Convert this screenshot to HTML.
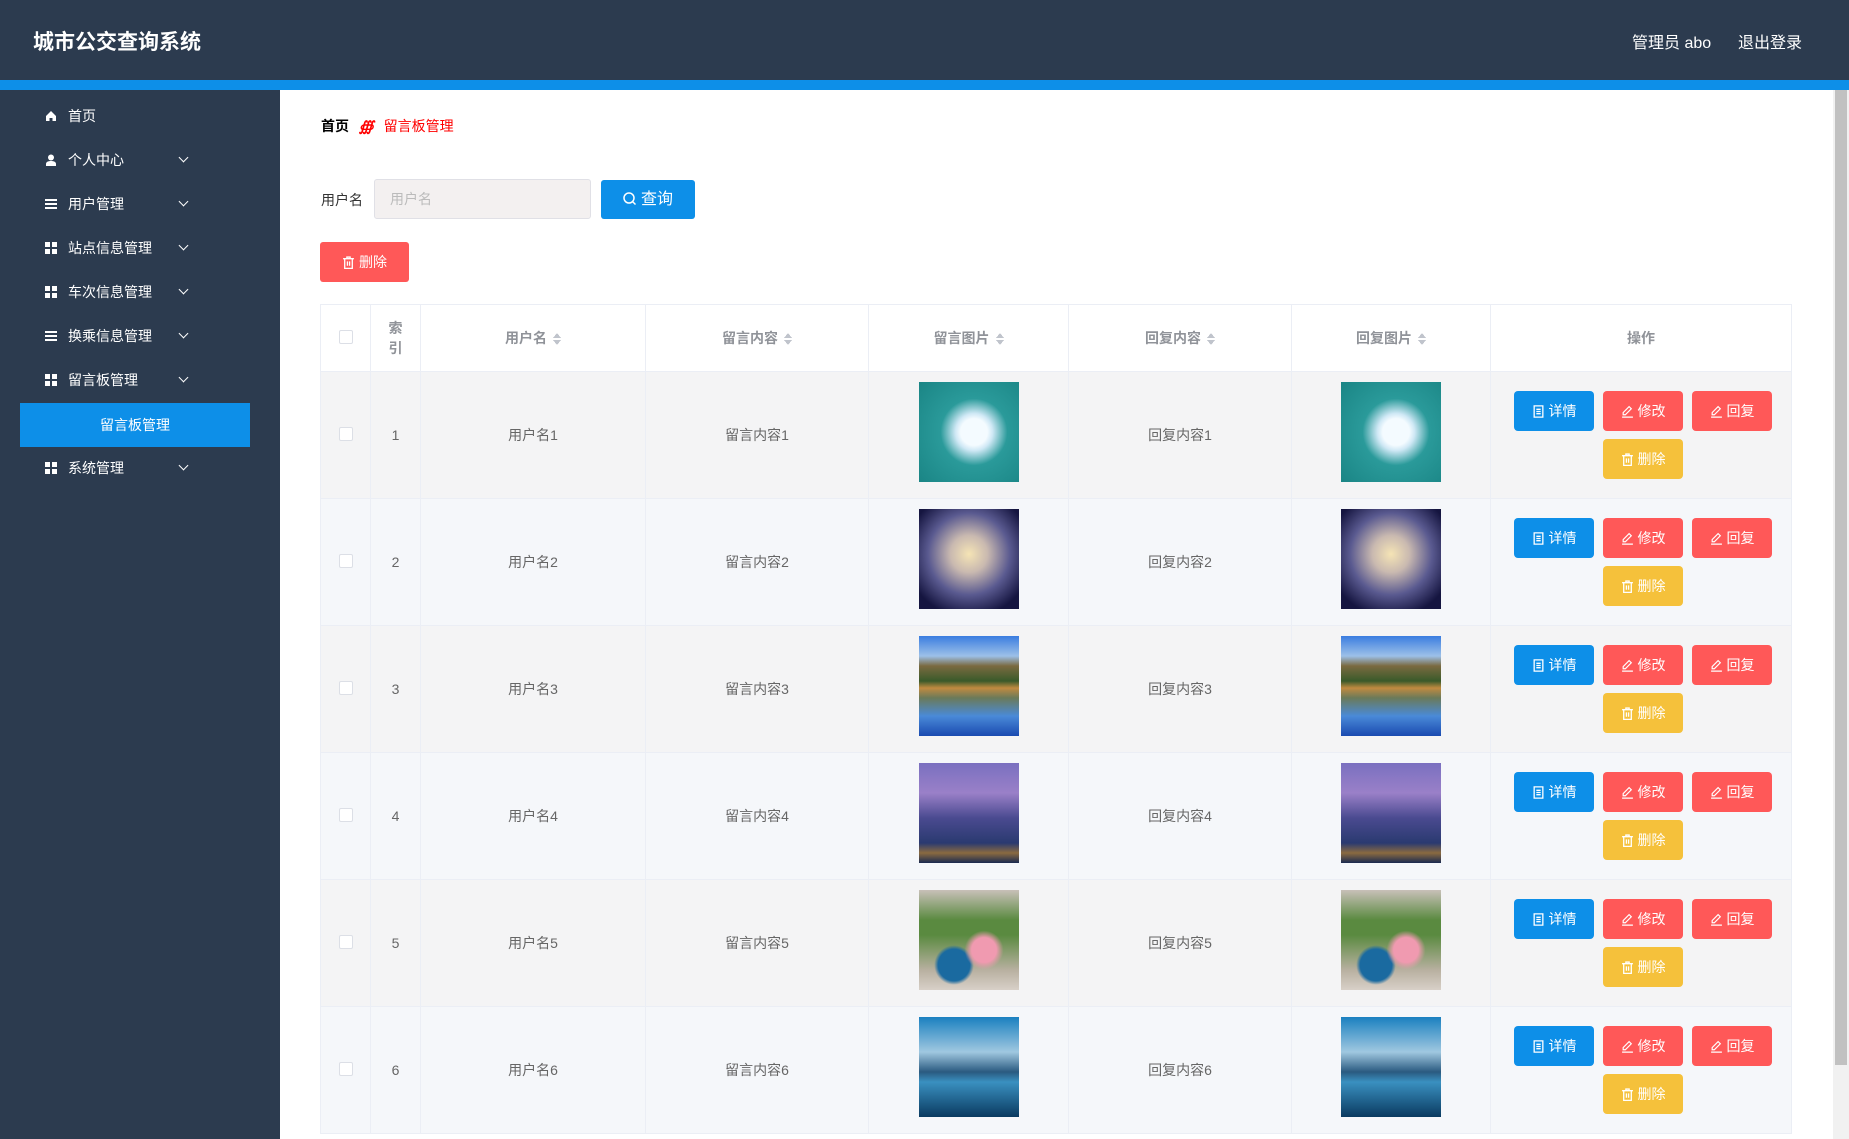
<!DOCTYPE html>
<html><head><meta charset="utf-8"><style>
*{box-sizing:border-box;margin:0;padding:0}
body{width:1849px;height:1139px;overflow:hidden;font-family:"Liberation Sans","Noto Sans CJK SC",sans-serif;background:#fff;position:relative}
.hd{position:absolute;left:0;top:0;width:1849px;height:80px;background:#2c3b4f}
.hd .t{position:absolute;left:33px;top:26px;color:#fff;font-size:21px;font-weight:bold}
.hd .hr{position:absolute;top:29px;color:#fff;font-size:16px}
.bar{position:absolute;left:0;top:80px;width:1849px;height:10px;background:#0d8fe8}
.sb{position:absolute;left:0;top:90px;width:280px;height:1049px;background:#2c3b4f}
.mi{position:absolute;left:0;width:280px;height:30px;color:#fff;font-size:14px;line-height:30px}
.mi .ic{position:absolute;left:45px;top:9px;width:12px;height:12px}
.mi .tx{position:absolute;left:68px}
.mi .cv{position:absolute;left:180px;top:9px;width:7px;height:7px;border-right:1.5px solid #fff;border-bottom:1.5px solid #fff;transform:rotate(45deg)}
.act{position:absolute;left:20px;top:403px;width:230px;height:44px;background:#0d8fe8;color:#fff;font-size:14px;text-align:center;line-height:44px}
.grid{background:linear-gradient(#2c3b4f,#2c3b4f) 5px 0/2px 12px no-repeat,linear-gradient(#2c3b4f,#2c3b4f) 0 5px/12px 2px no-repeat,#fff}
.lines{background:linear-gradient(#fff,#fff) 0 1px/12px 2px no-repeat,linear-gradient(#fff,#fff) 0 5px/12px 2px no-repeat,linear-gradient(#fff,#fff) 0 9px/12px 2px no-repeat}
.bc{position:absolute;left:321px;top:116px;font-size:14px}
.lbl{position:absolute;left:321px;top:190px;font-size:14px;color:#333}
.inp{position:absolute;left:374px;top:179px;width:217px;height:40px;background:#f3f0f0;border:1px solid #e0e0e6;border-radius:3px;color:#bbb;font-size:14px;line-height:38px;padding-left:15px}
.btn{position:absolute;color:#fff;font-size:14px;text-align:center;border-radius:3px}
.tb{position:absolute;left:320px;top:304px;width:1471px;border-collapse:collapse;table-layout:fixed}
.tb td,.tb th{border:1px solid #ebeef5;text-align:center;font-size:14px;color:#666;font-weight:normal}
.tb th{height:67px;color:#909399;font-weight:bold;background:#fff}
.tb td{height:126px}
.tb tr:nth-child(even) td{background:#f4f4f5}
.tb tr:nth-child(odd) td{background:#f5f7fa}
.srt{display:inline-block;width:8px;height:12px;vertical-align:middle;margin-left:6px;background:linear-gradient(to bottom right,transparent 50%,#c0c4cc 50%) 0 0/4px 5px no-repeat,linear-gradient(to bottom left,transparent 50%,#c0c4cc 50%) 4px 0/4px 5px no-repeat,linear-gradient(to top right,transparent 50%,#c0c4cc 50%) 0 7px/4px 5px no-repeat,linear-gradient(to top left,transparent 50%,#c0c4cc 50%) 4px 7px/4px 5px no-repeat}
.cb{display:inline-block;width:14px;height:14px;border:1px solid #dcdfe6;border-radius:2px;background:#fff}
.im{display:inline-block;width:100px;height:100px;vertical-align:middle;margin-top:-6px}
.ops{position:relative;height:126px}
.ob{position:absolute;width:80px;height:40px;border-radius:4px;color:#fff;font-size:14px;line-height:40px;text-align:center}
.ob svg,.btn svg{vertical-align:-2px;margin-right:4px}
.b{background:#0d8fe8}.r{background:#ff5858}.y{background:#f5c13b}
.i1{background:radial-gradient(circle at 55% 50%,#f4fbff 0 18%,#cfe8f5 25%,#2a9a9a 45%,#1a8585)}
.i2{background:radial-gradient(circle at 50% 45%,#f5e4b5 0,#c9b9b0 25%,#5a5a90 55%,#151540 85%)}
.i3{background:linear-gradient(#3a7de0 0,#9cc0e8 20%,#7a6a40 30%,#3a5a2a 45%,#c08a40 52%,#6a7a5a 62%,#4a8ad8 80%,#1a4ab0)}
.i4{background:linear-gradient(#7a70c0,#9a80c8 30%,#4a4a90 55%,#2a3a70 80%,#8a6a40 90%,#1a2a50)}
.i5{background:radial-gradient(circle at 65% 60%,#f09ab0 0 14%,transparent 22%),radial-gradient(circle at 35% 75%,#1a6aa0 0 16%,transparent 20%),linear-gradient(#c8c0b8,#5a8a40 30%,#5a8a40 45%,#b8b0a0 80%,#d8d0c8)}
.i6{background:linear-gradient(#1a80c0,#a0c8e0 35%,#2a5a80 55%,#3a90c0 65%,#0a3a60)}
.sc{position:absolute;left:1833px;top:90px;width:16px;height:1049px;background:#f1f1f1}
.sc div{position:absolute;left:2px;top:0;width:12px;height:975px;background:#c1c1c1}
</style></head><body>
<svg width="0" height="0" style="position:absolute"><defs>
<symbol id="tr" viewBox="0 0 12 12"><path d="M1 2.5h10M4.5 2.5V1h3v1.5M2.5 2.5v9h7v-9M5 5v4M7 5v4" fill="none" stroke="#fff" stroke-width="1.2"/></symbol>
<symbol id="dc" viewBox="0 0 12 12"><path d="M2 .8h8v10.4H2zM4 4h4M4 6h4M4 8h4" fill="none" stroke="#fff" stroke-width="1.2"/></symbol>
<symbol id="pn" viewBox="0 0 12 12"><path d="M7.5 1.5l2 2L4 9H2V7zM1 11.2h10" fill="none" stroke="#fff" stroke-width="1.1"/></symbol>
</defs></svg>
<div class="hd"><div class="t">城市公交查询系统</div><div class="hr" style="left:1632px">管理员 abo</div><div class="hr" style="left:1738px">退出登录</div></div>
<div class="bar"></div>
<div class="sb"></div>
<div class="mi" style="top:101px"><svg class="ic" viewBox="0 0 12 12"><path d="M6 1L1 6v5h3.5V8h3v3H11V6z" fill="#fff"/></svg><span class="tx">首页</span></div>
<div class="mi" style="top:145px"><svg class="ic" viewBox="0 0 12 12"><circle cx="6" cy="3.5" r="3" fill="#fff"/><path d="M1 12v-2c0-2 2-3 5-3s5 1 5 3v2z" fill="#fff"/></svg><span class="tx">个人中心</span><span class="cv"></span></div>
<div class="mi" style="top:189px"><span class="ic lines"></span><span class="tx">用户管理</span><span class="cv"></span></div>
<div class="mi" style="top:233px"><span class="ic grid"></span><span class="tx">站点信息管理</span><span class="cv"></span></div>
<div class="mi" style="top:277px"><span class="ic grid"></span><span class="tx">车次信息管理</span><span class="cv"></span></div>
<div class="mi" style="top:321px"><span class="ic lines"></span><span class="tx">换乘信息管理</span><span class="cv"></span></div>
<div class="mi" style="top:365px"><span class="ic grid"></span><span class="tx">留言板管理</span><span class="cv"></span></div>
<div class="act">留言板管理</div>
<div class="mi" style="top:453px"><span class="ic grid"></span><span class="tx">系统管理</span><span class="cv"></span></div>

<div class="bc"><b style="color:#000">首页</b> <i style="color:#f00;font-weight:bold;margin:0 6px">∰</i> <span style="color:#f00">留言板管理</span></div>
<div class="lbl">用户名</div>
<div class="inp">用户名</div>
<div class="btn" style="left:601px;top:180px;width:94px;height:39px;line-height:39px;background:#0d8fe8;font-size:16px"><svg width="14" height="14" viewBox="0 0 14 14"><circle cx="6" cy="6" r="5" fill="none" stroke="#fff" stroke-width="1.5"/><path d="M9.5 9.5l3 3" stroke="#fff" stroke-width="1.5"/></svg>查询</div>
<div class="btn" style="left:320px;top:242px;width:89px;height:40px;line-height:40px;background:#ff5858"><svg width="13" height="13"><use href="#tr"/></svg>删除</div>

<table class="tb">
<colgroup><col style="width:50px"><col style="width:50px"><col style="width:225px"><col style="width:223px"><col style="width:200px"><col style="width:223px"><col style="width:199px"><col style="width:301px"></colgroup>
<tr><th><span class="cb"></span></th><th>索<br>引</th><th>用户名<span class="srt"></span></th><th>留言内容<span class="srt"></span></th><th>留言图片<span class="srt"></span></th><th>回复内容<span class="srt"></span></th><th>回复图片<span class="srt"></span></th><th>操作</th></tr>
<tr><td><span class="cb"></span></td><td>1</td><td>用户名1</td><td>留言内容1</td><td><span class="im i1"></span></td><td>回复内容1</td><td><span class="im i1"></span></td><td><div class="ops"><div class="ob b" style="left:23px;top:19px"><svg width="13" height="13"><use href="#dc"/></svg>详情</div><div class="ob r" style="left:112px;top:19px"><svg width="13" height="13"><use href="#pn"/></svg>修改</div><div class="ob r" style="left:201px;top:19px"><svg width="13" height="13"><use href="#pn"/></svg>回复</div><div class="ob y" style="left:112px;top:67px"><svg width="13" height="13"><use href="#tr"/></svg>删除</div></div></td></tr>
<tr><td><span class="cb"></span></td><td>2</td><td>用户名2</td><td>留言内容2</td><td><span class="im i2"></span></td><td>回复内容2</td><td><span class="im i2"></span></td><td><div class="ops"><div class="ob b" style="left:23px;top:19px"><svg width="13" height="13"><use href="#dc"/></svg>详情</div><div class="ob r" style="left:112px;top:19px"><svg width="13" height="13"><use href="#pn"/></svg>修改</div><div class="ob r" style="left:201px;top:19px"><svg width="13" height="13"><use href="#pn"/></svg>回复</div><div class="ob y" style="left:112px;top:67px"><svg width="13" height="13"><use href="#tr"/></svg>删除</div></div></td></tr>
<tr><td><span class="cb"></span></td><td>3</td><td>用户名3</td><td>留言内容3</td><td><span class="im i3"></span></td><td>回复内容3</td><td><span class="im i3"></span></td><td><div class="ops"><div class="ob b" style="left:23px;top:19px"><svg width="13" height="13"><use href="#dc"/></svg>详情</div><div class="ob r" style="left:112px;top:19px"><svg width="13" height="13"><use href="#pn"/></svg>修改</div><div class="ob r" style="left:201px;top:19px"><svg width="13" height="13"><use href="#pn"/></svg>回复</div><div class="ob y" style="left:112px;top:67px"><svg width="13" height="13"><use href="#tr"/></svg>删除</div></div></td></tr>
<tr><td><span class="cb"></span></td><td>4</td><td>用户名4</td><td>留言内容4</td><td><span class="im i4"></span></td><td>回复内容4</td><td><span class="im i4"></span></td><td><div class="ops"><div class="ob b" style="left:23px;top:19px"><svg width="13" height="13"><use href="#dc"/></svg>详情</div><div class="ob r" style="left:112px;top:19px"><svg width="13" height="13"><use href="#pn"/></svg>修改</div><div class="ob r" style="left:201px;top:19px"><svg width="13" height="13"><use href="#pn"/></svg>回复</div><div class="ob y" style="left:112px;top:67px"><svg width="13" height="13"><use href="#tr"/></svg>删除</div></div></td></tr>
<tr><td><span class="cb"></span></td><td>5</td><td>用户名5</td><td>留言内容5</td><td><span class="im i5"></span></td><td>回复内容5</td><td><span class="im i5"></span></td><td><div class="ops"><div class="ob b" style="left:23px;top:19px"><svg width="13" height="13"><use href="#dc"/></svg>详情</div><div class="ob r" style="left:112px;top:19px"><svg width="13" height="13"><use href="#pn"/></svg>修改</div><div class="ob r" style="left:201px;top:19px"><svg width="13" height="13"><use href="#pn"/></svg>回复</div><div class="ob y" style="left:112px;top:67px"><svg width="13" height="13"><use href="#tr"/></svg>删除</div></div></td></tr>
<tr><td><span class="cb"></span></td><td>6</td><td>用户名6</td><td>留言内容6</td><td><span class="im i6"></span></td><td>回复内容6</td><td><span class="im i6"></span></td><td><div class="ops"><div class="ob b" style="left:23px;top:19px"><svg width="13" height="13"><use href="#dc"/></svg>详情</div><div class="ob r" style="left:112px;top:19px"><svg width="13" height="13"><use href="#pn"/></svg>修改</div><div class="ob r" style="left:201px;top:19px"><svg width="13" height="13"><use href="#pn"/></svg>回复</div><div class="ob y" style="left:112px;top:67px"><svg width="13" height="13"><use href="#tr"/></svg>删除</div></div></td></tr>
</table>
<div class="sc"><div></div></div>
</body></html>
